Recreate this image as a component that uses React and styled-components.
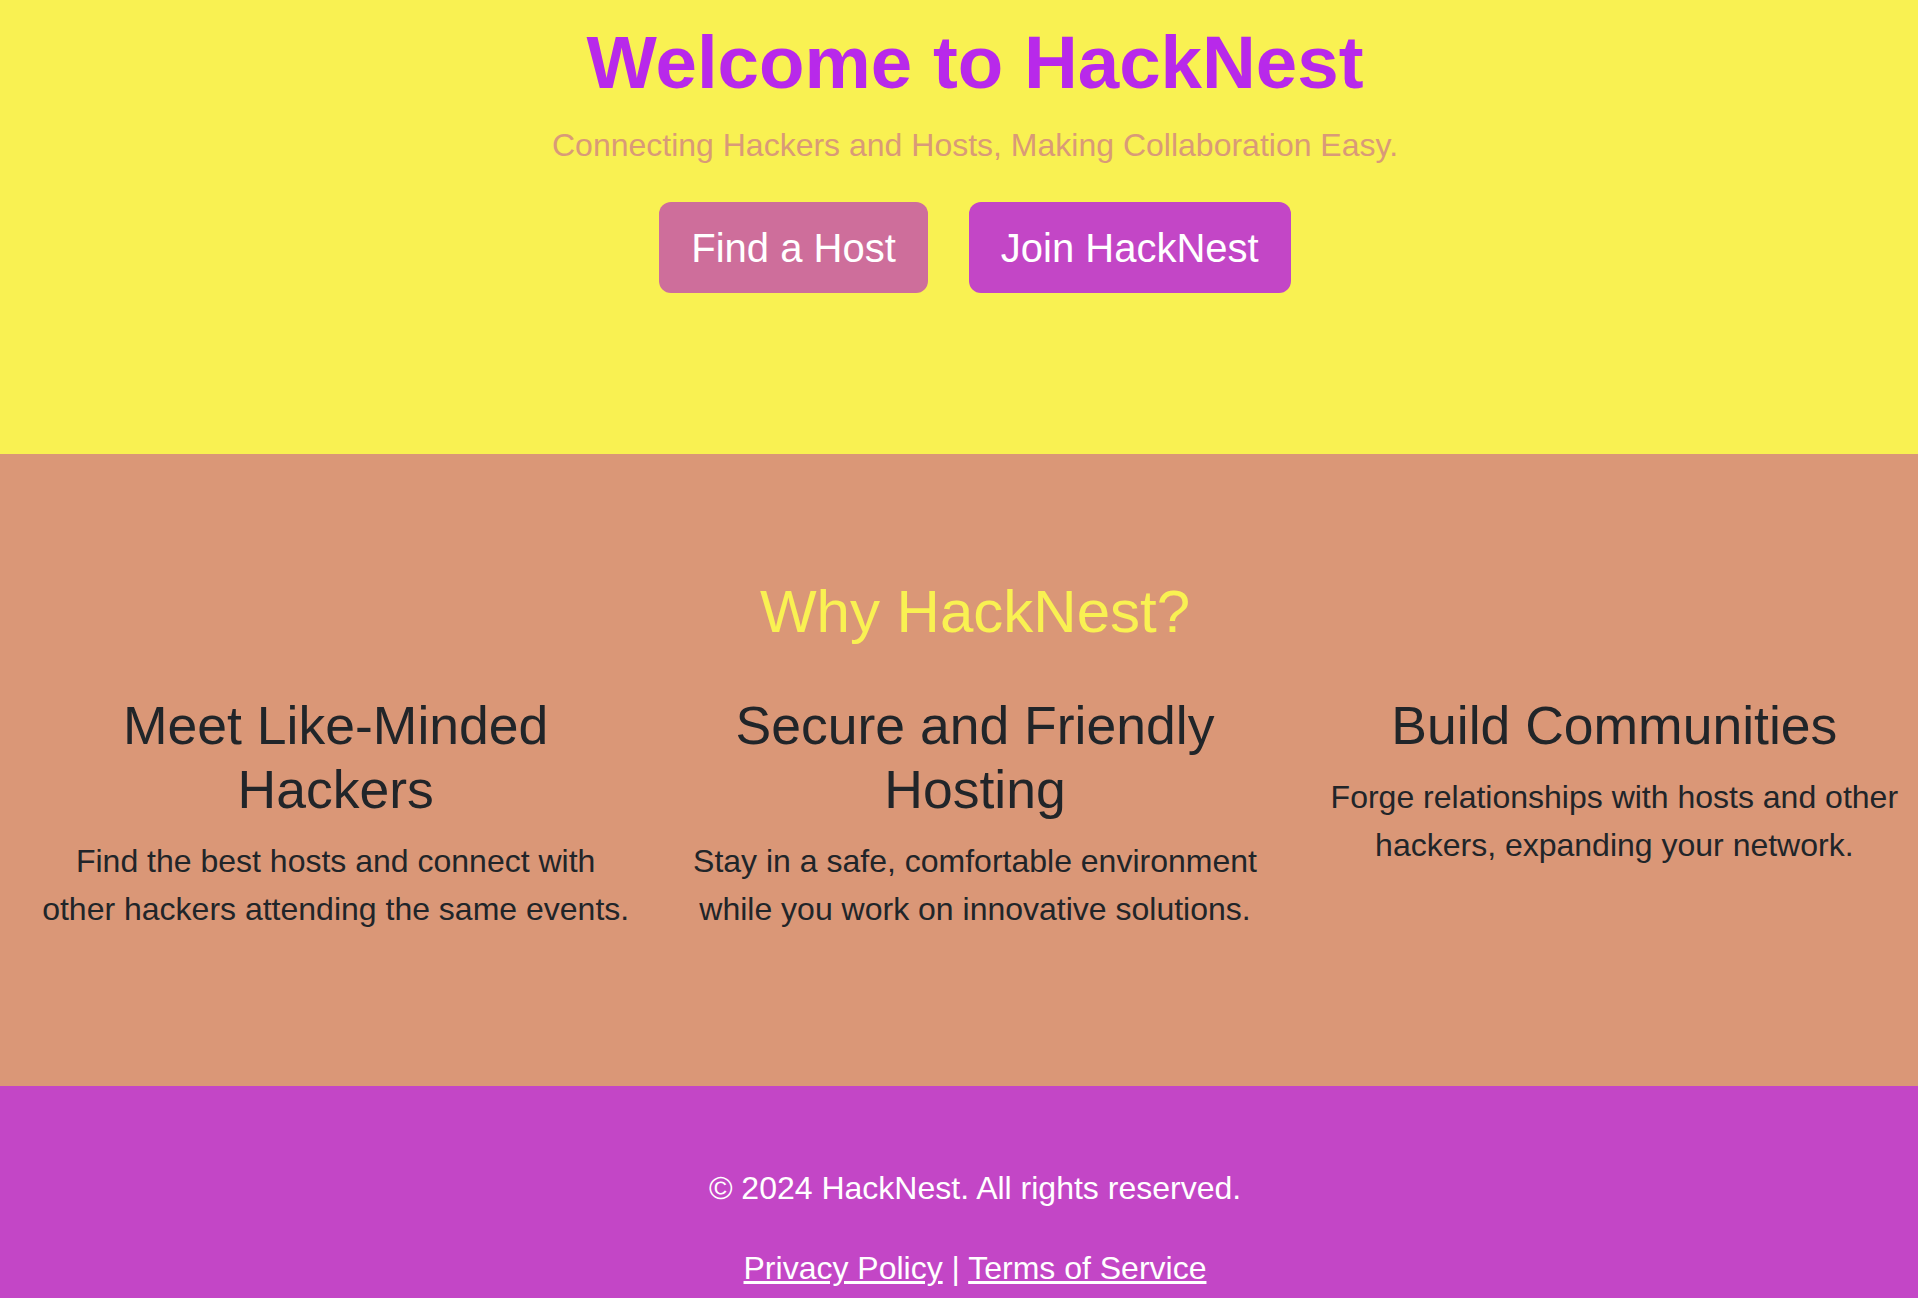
import styled, { createGlobalStyle } from 'styled-components';

const GlobalStyle = createGlobalStyle`
  html, body {
    margin: 0;
    padding: 0;
    overflow-x: hidden;
  }
  body {
    font-family: "Liberation Sans", Arial, Helvetica, sans-serif;
    line-height: 1.5;
  }
`;

const features = [
  {
    title: 'Meet Like-Minded Hackers',
    text: 'Find the best hosts and connect with other hackers attending the same events.',
  },
  {
    title: 'Secure and Friendly Hosting',
    text: 'Stay in a safe, comfortable environment while you work on innovative solutions.',
  },
  {
    title: 'Build Communities',
    text: 'Forge relationships with hosts and other hackers, expanding your network.',
  },
];

export default function App() {
  return (
    <>
      <GlobalStyle />
      <Hero>
        <Title>Welcome to HackNest</Title>
        <Tagline>Connecting Hackers and Hosts, Making Collaboration Easy.</Tagline>
        <ButtonRow>
          <Button $bg="#ce6e9b">Find a Host</Button>
          <Button $bg="#c346c6">Join HackNest</Button>
        </ButtonRow>
      </Hero>
      <Features>
        <SectionTitle>Why HackNest?</SectionTitle>
        <FeatureGrid>
          {features.map((f) => (
            <Feature key={f.title}>
              <h3>{f.title}</h3>
              <p>{f.text}</p>
            </Feature>
          ))}
        </FeatureGrid>
      </Features>
      <Footer>
        <p>© 2024 HackNest. All rights reserved.</p>
        <p>
          <a href="#">Privacy Policy</a> | <a href="#">Terms of Service</a>
        </p>
      </Footer>
    </>
  );
}

const Hero = styled.header`
  width: 100%;
  padding: 17px 16px 161px;
  background-color: #f9f152;
  text-align: center;
`;

const Title = styled.h1`
  margin: 0;
  font-size: 74.5px;
  line-height: 91px;
  font-weight: 700;
  color: #b829ea;
`;

const Tagline = styled.p`
  margin: 13px 0 33px;
  font-size: 32px;
  line-height: 1.5;
  color: #d99a78;
`;

const ButtonRow = styled.div`
  display: flex;
  justify-content: center;
  gap: 41px;
`;

const Button = styled.button`
  font-family: inherit;
  font-size: 40px;
  line-height: 1.5;
  padding: 15.5px 32px;
  border: none;
  border-radius: 12px;
  color: #ffffff;
  background-color: ${(p) => p.$bg};
  cursor: pointer;
`;

const Features = styled.section`
  width: 100%;
  padding: 122px 16px 153px;
  background-color: #da9777;
  text-align: center;
  color: #212529;
`;

const SectionTitle = styled.h2`
  margin: 0;
  font-size: 60px;
  line-height: 72px;
  font-weight: 400;
  color: #f9f152;
`;

const FeatureGrid = styled.div`
  margin-top: 46px;
  display: grid;
  grid-template-columns: repeat(3, 1fr);
  align-items: start;
`;

const Feature = styled.div`
  padding: 0 24px;
  h3 {
    margin: 0 0 15px;
    font-size: 53.5px;
    line-height: 64px;
    font-weight: 400;
  }
  p {
    margin: 0;
    font-size: 32px;
    line-height: 48px;
  }
`;

const Footer = styled.footer`
  width: 100%;
  padding: 46px 16px 20px;
  background-color: #c346c6;
  color: #ffffff;
  text-align: center;
  p {
    margin: 32px 0;
    font-size: 32px;
    line-height: 48px;
  }
  a {
    color: #ffffff;
    text-decoration: underline;
  }
`;
